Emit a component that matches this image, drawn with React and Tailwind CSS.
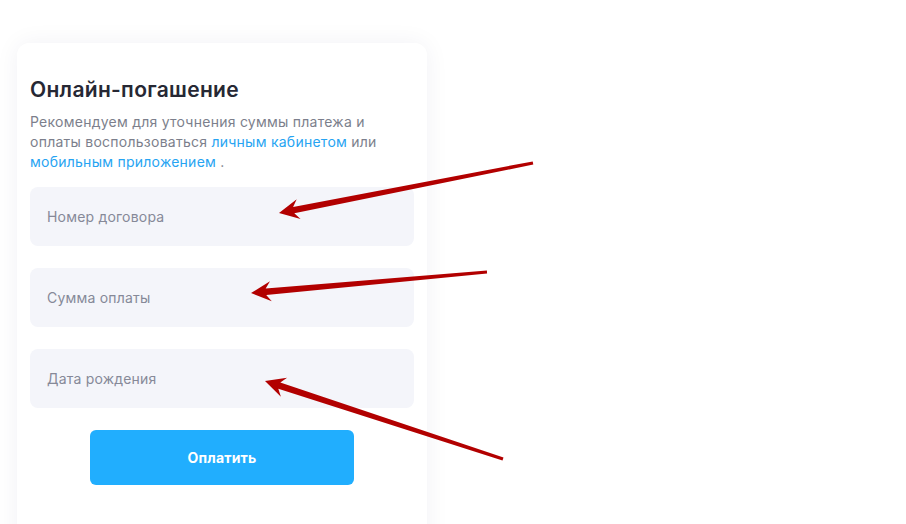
import React from "react";

const arrows = [
  { from: [533, 163], to: [279, 213] },
  { from: [487, 272], to: [251, 293] },
  { from: [503, 459], to: [265, 381] },
];

const arrowShape = ({ from, to }) => {
  const [x1, y1] = from;
  const [x2, y2] = to;
  const len = Math.hypot(x2 - x1, y2 - y1);
  const ux = (x2 - x1) / len;
  const uy = (y2 - y1) / len;
  const px = -uy;
  const py = ux;
  const headLen = 20;
  const headW = 10;
  const bx = x2 - ux * headLen;
  const by = y2 - uy * headLen;
  const tail = 1.6;
  const neck = 3.2;
  const pts = [
    [x1 + px * tail, y1 + py * tail],
    [bx + ux * 5 + px * neck, by + uy * 5 + py * neck],
    [bx + px * headW, by + py * headW],
    [x2, y2],
    [bx - px * headW, by - py * headW],
    [bx + ux * 5 - px * neck, by + uy * 5 - py * neck],
    [x1 - px * tail, y1 - py * tail],
  ];
  return pts.map((p) => p.map((v) => v.toFixed(1)).join(",")).join(" ");
};

const Field = ({ label }) => (
  <div className="h-[59px] rounded-lg bg-[#f4f5fa] flex items-center px-[17px] text-[14px] tracking-[0.2px] text-[#868998]">
    {label}
  </div>
);

export default function App() {
  return (
    <div
      className="relative w-[906px] h-[524px] overflow-hidden bg-white"
      style={{ fontFamily: "Inter, 'Noto Sans', sans-serif" }}
    >
      <div className="pt-[43px] pl-[17px]">
        <div className="w-[410px] h-[520px] rounded-xl bg-white shadow-[0_0_24px_rgba(30,40,80,0.06)] px-[13px] pt-[33px]">
          <h2 className="text-[21px] leading-[28px] font-semibold tracking-[0.3px] text-[#262834]">
            Онлайн-погашение
          </h2>
          <p className="mt-[8px] text-[14px] leading-[20px] tracking-[0.25px] text-[#7c7f8c]">
            Рекомендуем для уточнения суммы платежа и
            <br />
            оплаты воспользоваться{" "}
            <span className="text-[#27a4f2]">личным кабинетом</span> или
            <br />
            <span className="text-[#27a4f2]">мобильным приложением</span> .
          </p>
          <div className="mt-[15px] flex flex-col gap-[22px]">
            <Field label="Номер договора" />
            <Field label="Сумма оплаты" />
            <Field label="Дата рождения" />
          </div>
          <div className="mt-[22px] flex justify-center">
            <button className="w-[264px] h-[55px] rounded-md bg-[#21aefe] text-white text-[14px] font-bold tracking-[0.2px]">
              Оплатить
            </button>
          </div>
        </div>
      </div>
      <svg className="absolute inset-0 pointer-events-none" width="906" height="524">
        {arrows.map((a, i) => (
          <polygon key={i} points={arrowShape(a)} fill="#b20000" />
        ))}
      </svg>
    </div>
  );
}
